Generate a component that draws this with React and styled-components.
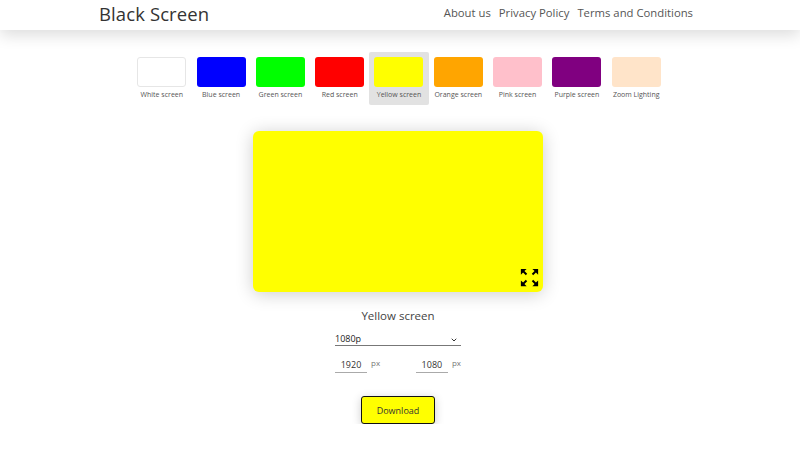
import React, { useState } from "react";
import styled, { createGlobalStyle } from "styled-components";
import { MdZoomOutMap } from "react-icons/md";
import { ChevronDown } from "lucide-react";

const colors = [
  { name: "White screen", value: "#ffffff" },
  { name: "Blue screen", value: "#0000ff" },
  { name: "Green screen", value: "#00ff00" },
  { name: "Red screen", value: "#ff0000" },
  { name: "Yellow screen", value: "#ffff00" },
  { name: "Orange screen", value: "#ffa500" },
  { name: "Pink screen", value: "#ffc0cb" },
  { name: "Purple screen", value: "#800080" },
  { name: "Zoom Lighting", value: "#ffe4c9" },
];

const sizes = {
  "1080p": [1920, 1080],
  "720p": [1280, 720],
  "4K": [3840, 2160],
};

const App = () => {
  const [selected, setSelected] = useState(4);
  const [size, setSize] = useState("1080p");
  const [width, setWidth] = useState(1920);
  const [height, setHeight] = useState(1080);
  const color = colors[selected];

  const handleSize = (e) => {
    const [w, h] = sizes[e.target.value];
    setSize(e.target.value);
    setWidth(w);
    setHeight(h);
  };

  return (
    <>
      <GlobalStyle />
      <Header>
        <Brand>Black Screen</Brand>
        <Nav>
          <NavLink href="#">About us</NavLink>
          <NavLink href="#">Privacy Policy</NavLink>
          <NavLink href="#">Terms and Conditions</NavLink>
        </Nav>
      </Header>
      <Main>
        <Swatches>
          {colors.map((c, i) => (
            <SwatchItem
              key={c.name}
              $active={i === selected}
              onClick={() => setSelected(i)}
            >
              <Swatch $color={c.value} $bordered={c.value === "#ffffff"} />
              <SwatchLabel>{c.name}</SwatchLabel>
            </SwatchItem>
          ))}
        </Swatches>
        <Preview $color={color.value}>
          <FullscreenButton>
            <MdZoomOutMap size={23} />
          </FullscreenButton>
        </Preview>
        <ScreenName>{color.name}</ScreenName>
        <Controls>
          <SelectWrap>
            <Select value={size} onChange={handleSize}>
              {Object.keys(sizes).map((k) => (
                <option key={k} value={k}>
                  {k}
                </option>
              ))}
            </Select>
            <Chevron>
              <ChevronDown size={8} strokeWidth={3} />
            </Chevron>
          </SelectWrap>
          <SizeRow>
            <SizeField>
              <SizeInput
                value={width}
                onChange={(e) => setWidth(e.target.value)}
              />
              <Unit>px</Unit>
            </SizeField>
            <SizeField>
              <SizeInput
                value={height}
                onChange={(e) => setHeight(e.target.value)}
              />
              <Unit>px</Unit>
            </SizeField>
          </SizeRow>
        </Controls>
        <DownloadButton $color={color.value}>Download</DownloadButton>
      </Main>
    </>
  );
};

export default App;

const GlobalStyle = createGlobalStyle`
  body {
    margin: 0;
    background: #fff;
    font-family: "Open Sans", "Liberation Sans", sans-serif;
    color: #333;
  }
`;

const Header = styled.header`
  height: 30px;
  display: flex;
  align-items: center;
  justify-content: space-between;
  padding: 0 107px 4px 99px;
  box-sizing: border-box;
  background: #fff;
  box-shadow: 0 5px 16px rgba(0, 0, 0, 0.14);
  position: relative;
  z-index: 1;
`;

const Brand = styled.div`
  font-size: 18.5px;
  color: #333;
  letter-spacing: 0.1px;
`;

const Nav = styled.nav`
  display: flex;
  gap: 8px;
  margin-top: -1px;
`;

const NavLink = styled.a`
  font-size: 11.3px;
  color: #555;
  text-decoration: none;
`;

const Main = styled.main`
  display: flex;
  flex-direction: column;
  align-items: center;
  padding-top: 22px;
`;

const Swatches = styled.div`
  display: flex;
  margin-right: 2px;
`;

const SwatchItem = styled.div`
  width: 59.3px;
  box-sizing: border-box;
  padding: 5px 5px 0;
  height: 53px;
  display: flex;
  flex-direction: column;
  align-items: center;
  border-radius: 2px;
  cursor: pointer;
  background: ${(p) => (p.$active ? "#e2e2e2" : "transparent")};
`;

const Swatch = styled.div`
  width: 49px;
  height: 30px;
  box-sizing: border-box;
  border-radius: 3px;
  background: ${(p) => p.$color};
  border: ${(p) => (p.$bordered ? "1px solid #e6e6e6" : "none")};
`;

const SwatchLabel = styled.div`
  margin-top: 3px;
  font-size: 7px;
  color: #555;
  white-space: nowrap;
`;

const Preview = styled.div`
  position: relative;
  margin-top: 26px;
  margin-right: 4px;
  width: 290px;
  height: 161px;
  border-radius: 6px;
  background: ${(p) => p.$color};
  box-shadow: 0 2px 18px rgba(0, 0, 0, 0.2);
`;

const FullscreenButton = styled.div`
  position: absolute;
  right: 2px;
  bottom: 3px;
  display: flex;
  color: #000;
  cursor: pointer;
`;

const ScreenName = styled.div`
  margin-top: 16px;
  margin-right: 4px;
  font-size: 11.5px;
  line-height: 16px;
  color: #444;
`;

const Controls = styled.div`
  margin-top: 7px;
  margin-right: 4px;
  width: 126px;
  display: flex;
  flex-direction: column;
  gap: 8px;
`;

const SelectWrap = styled.div`
  position: relative;
  display: flex;
`;

const Select = styled.select`
  appearance: none;
  width: 100%;
  height: 15px;
  box-sizing: border-box;
  border: none;
  border-radius: 0;
  border-bottom: 1px solid #777;
  background: transparent;
  font-family: inherit;
  font-size: 9px;
  line-height: 12px;
  color: #222;
  padding: 2px 0 0;
  outline: none;
`;

const Chevron = styled.span`
  position: absolute;
  right: 3px;
  top: 5px;
  display: flex;
  color: #333;
  pointer-events: none;
`;

const SizeRow = styled.div`
  display: flex;
  justify-content: space-between;
`;

const SizeField = styled.div`
  display: flex;
  align-items: flex-start;
  gap: 4px;
`;

const SizeInput = styled.input`
  width: 32px;
  height: 19px;
  box-sizing: border-box;
  border: none;
  border-radius: 0;
  border-bottom: 1px solid #aaa;
  font-family: inherit;
  font-size: 9px;
  color: #333;
  text-align: center;
  padding: 2px 0 0;
  outline: none;
`;

const Unit = styled.span`
  font-size: 8px;
  line-height: 12px;
  color: #777;
  margin-top: 3px;
`;

const DownloadButton = styled.button`
  margin-top: 23px;
  margin-right: 4px;
  width: 74px;
  height: 28px;
  border: 1px solid #111;
  border-radius: 3px;
  background: ${(p) => p.$color};
  font-family: inherit;
  font-size: 9px;
  color: #333;
  box-shadow: 0 2px 10px rgba(0, 0, 0, 0.2);
  cursor: pointer;
`;
